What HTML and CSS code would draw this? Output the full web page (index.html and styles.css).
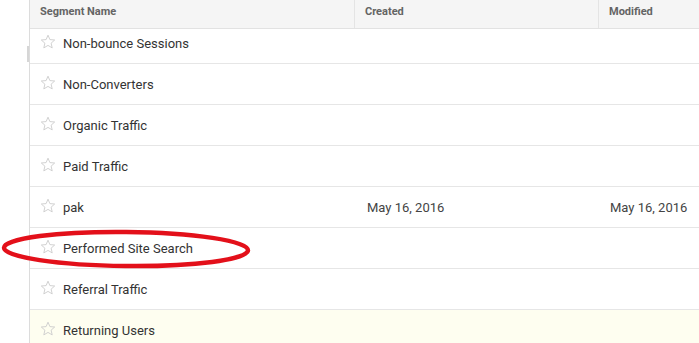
FILE: index.html
```html
<!DOCTYPE html>
<html>
<head>
<meta charset="utf-8">
<link rel="stylesheet" href="styles.css">
</head>
<body>
<div class="page">
  <div class="edge-mark"></div>
  <div class="table">
    <div class="thead">
      <div class="th col-name">Segment Name</div>
      <div class="th col-created">Created</div>
      <div class="th col-modified">Modified</div>
    </div>
    <div class="row row--clipped">
      <div class="td col-name"><span class="star"><svg viewBox="0 0 16 16" width="16" height="16"><path d="M8 1.2l1.9 4.4 4.8.4-3.6 3.2 1.1 4.7L8 11.4l-4.2 2.5 1.1-4.7L1.3 6l4.8-.4z" fill="none" stroke="#cccccc" stroke-width="0.9" stroke-linejoin="round"/></svg></span>Non-bounce Sessions</div>
      <div class="td col-created"></div>
      <div class="td col-modified"></div>
    </div>
    <div class="row">
      <div class="td col-name"><span class="star"><svg viewBox="0 0 16 16" width="16" height="16"><path d="M8 1.2l1.9 4.4 4.8.4-3.6 3.2 1.1 4.7L8 11.4l-4.2 2.5 1.1-4.7L1.3 6l4.8-.4z" fill="none" stroke="#cccccc" stroke-width="0.9" stroke-linejoin="round"/></svg></span>Non-Converters</div>
      <div class="td col-created"></div>
      <div class="td col-modified"></div>
    </div>
    <div class="row">
      <div class="td col-name"><span class="star"><svg viewBox="0 0 16 16" width="16" height="16"><path d="M8 1.2l1.9 4.4 4.8.4-3.6 3.2 1.1 4.7L8 11.4l-4.2 2.5 1.1-4.7L1.3 6l4.8-.4z" fill="none" stroke="#cccccc" stroke-width="0.9" stroke-linejoin="round"/></svg></span>Organic Traffic</div>
      <div class="td col-created"></div>
      <div class="td col-modified"></div>
    </div>
    <div class="row">
      <div class="td col-name"><span class="star"><svg viewBox="0 0 16 16" width="16" height="16"><path d="M8 1.2l1.9 4.4 4.8.4-3.6 3.2 1.1 4.7L8 11.4l-4.2 2.5 1.1-4.7L1.3 6l4.8-.4z" fill="none" stroke="#cccccc" stroke-width="0.9" stroke-linejoin="round"/></svg></span>Paid Traffic</div>
      <div class="td col-created"></div>
      <div class="td col-modified"></div>
    </div>
    <div class="row">
      <div class="td col-name"><span class="star"><svg viewBox="0 0 16 16" width="16" height="16"><path d="M8 1.2l1.9 4.4 4.8.4-3.6 3.2 1.1 4.7L8 11.4l-4.2 2.5 1.1-4.7L1.3 6l4.8-.4z" fill="none" stroke="#cccccc" stroke-width="0.9" stroke-linejoin="round"/></svg></span>pak</div>
      <div class="td col-created date">May 16, 2016</div>
      <div class="td col-modified date">May 16, 2016</div>
    </div>
    <div class="row">
      <div class="td col-name"><span class="star"><svg viewBox="0 0 16 16" width="16" height="16"><path d="M8 1.2l1.9 4.4 4.8.4-3.6 3.2 1.1 4.7L8 11.4l-4.2 2.5 1.1-4.7L1.3 6l4.8-.4z" fill="none" stroke="#cccccc" stroke-width="0.9" stroke-linejoin="round"/></svg></span>Performed Site Search</div>
      <div class="td col-created"></div>
      <div class="td col-modified"></div>
    </div>
    <div class="row">
      <div class="td col-name"><span class="star"><svg viewBox="0 0 16 16" width="16" height="16"><path d="M8 1.2l1.9 4.4 4.8.4-3.6 3.2 1.1 4.7L8 11.4l-4.2 2.5 1.1-4.7L1.3 6l4.8-.4z" fill="none" stroke="#cccccc" stroke-width="0.9" stroke-linejoin="round"/></svg></span>Referral Traffic</div>
      <div class="td col-created"></div>
      <div class="td col-modified"></div>
    </div>
    <div class="row row--hover">
      <div class="td col-name"><span class="star"><svg viewBox="0 0 16 16" width="16" height="16"><path d="M8 1.2l1.9 4.4 4.8.4-3.6 3.2 1.1 4.7L8 11.4l-4.2 2.5 1.1-4.7L1.3 6l4.8-.4z" fill="none" stroke="#cccccc" stroke-width="0.9" stroke-linejoin="round"/></svg></span>Returning Users</div>
      <div class="td col-created"></div>
      <div class="td col-modified"></div>
    </div>
  </div>
  <svg class="annotation" width="260" height="50" viewBox="0 0 260 50">
    <ellipse cx="126" cy="24" rx="122" ry="17" fill="none" stroke="#e3101a" stroke-width="4.5" transform="rotate(0.6 126 24)"/>
  </svg>
</div>
</body>
</html>
```

FILE: styles.css
```css
html, body {
  margin: 0;
  padding: 0;
  background: #ffffff;
  overflow: hidden;
}

.page {
  position: relative;
  width: 699px;
  height: 343px;
  overflow: hidden;
  font-family: Roboto, "Liberation Sans", Arial, sans-serif;
}

.edge-mark {
  position: absolute;
  left: 27px;
  top: 46px;
  width: 2px;
  height: 16px;
  background: #d6d6d6;
}

.table {
  margin-left: 29px;
  width: 720px;
  border-left: 1px solid #dcdcdc;
}

.thead {
  display: flex;
  height: 28px;
  background: #f5f5f5;
  border-bottom: 1px solid #e2e2e2;
}

.th {
  font-size: 11px;
  font-weight: 700;
  color: #646464;
  line-height: 14px;
  padding: 5px 10px 0;
  box-sizing: border-box;
}

.th + .th {
  border-left: 1px solid #e4e4e4;
}

.col-name { width: 324px; flex: none; box-sizing: border-box; }
.col-created { width: 244px; flex: none; box-sizing: border-box; }
.col-modified { width: 150px; flex: none; box-sizing: border-box; }

.row {
  display: flex;
  align-items: center;
  height: 41px;
  box-sizing: border-box;
  border-bottom: 1px solid #e6e6e6;
}

.row--clipped {
  height: 35px;
  padding-bottom: 6px;
}

.row--hover {
  background: #fefef0;
}

.td {
  display: flex;
  align-items: center;
  font-size: 13px;
  color: #333333;
  padding-left: 10px;
}

.td.date {
  color: #444444;
  padding-left: 13px;
}

.col-modified.date {
  padding-left: 12px;
}

.star {
  display: inline-flex;
  width: 16px;
  height: 16px;
  margin-right: 7px;
  margin-top: -2px;
}

.annotation {
  position: absolute;
  left: 0;
  top: 225px;
}
```
